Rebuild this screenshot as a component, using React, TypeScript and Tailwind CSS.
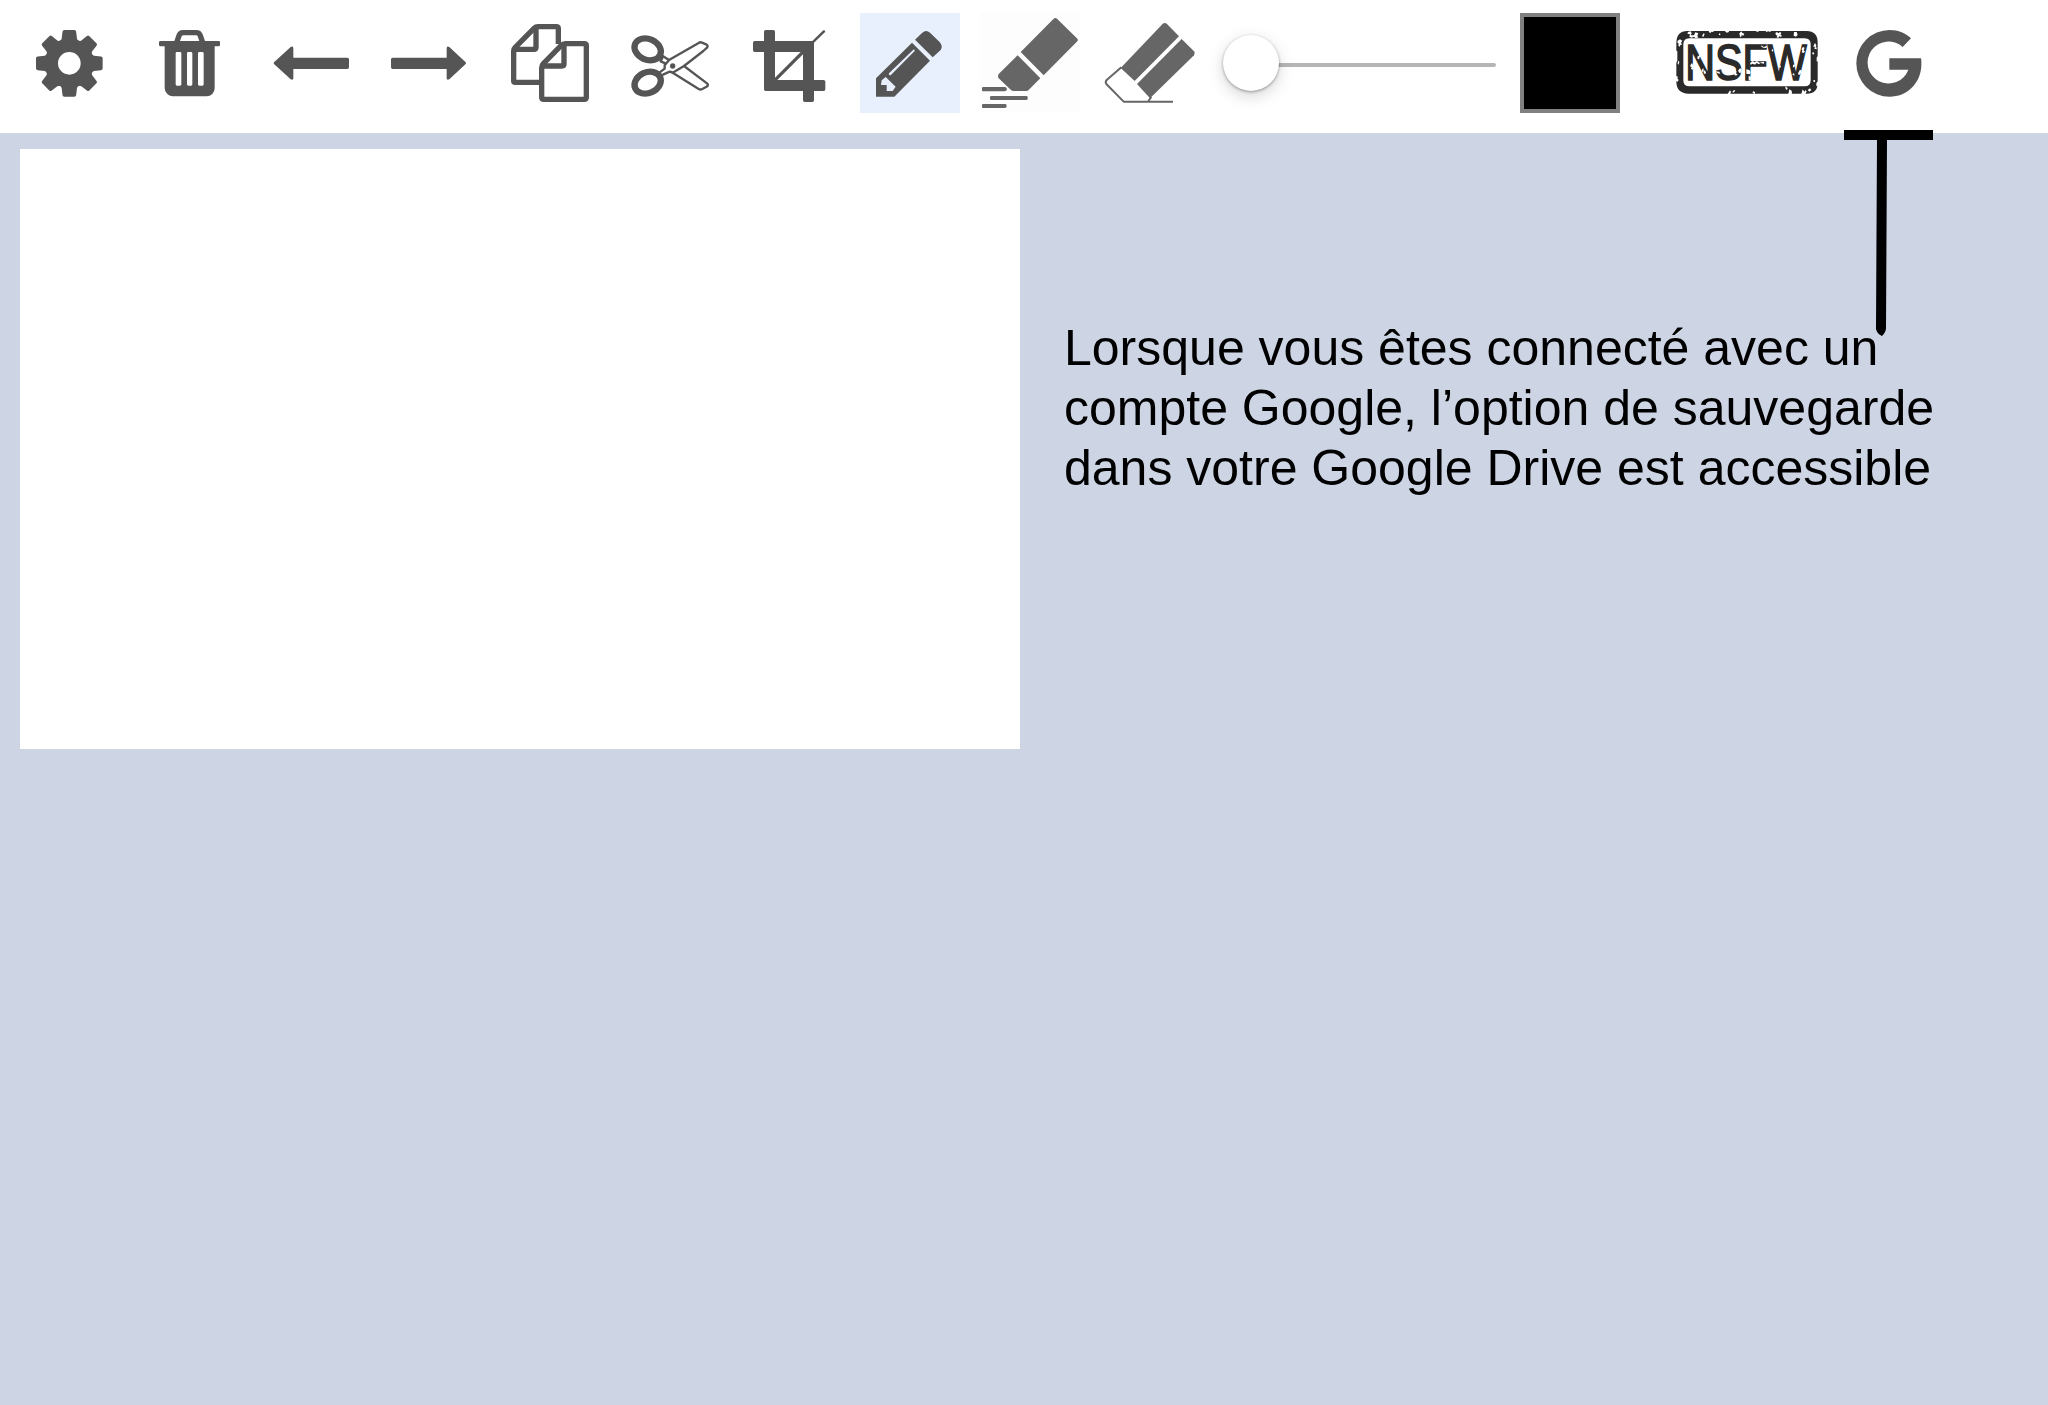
import type { ReactNode } from "react";

type ToolProps = {
  label: string;
  viewBox: string;
  className?: string;
  children: ReactNode;
};

function Tool({ label, viewBox, className = "text-[#555555]", children }: ToolProps) {
  return (
    <button type="button" aria-label={label} className={`h-[100px] w-[100px] shrink-0 ${className}`}>
      <svg viewBox={viewBox} className="block h-full w-full" fill="currentColor">
        {children}
      </svg>
    </button>
  );
}

const TEETH = [0, 45, 90, 135, 180, 225, 270, 315];

function GearIcon() {
  return (
    <>
      <path
        fillRule="evenodd"
        d="M208 116a74 74 0 1 0 0 148a74 74 0 1 0 0-148zM208 156a34 34 0 1 1 0 68a34 34 0 1 1 0-68z"
      />
      {TEETH.map((angle) => (
        <path
          key={angle}
          transform={`rotate(${angle} 208 190)`}
          d="M193 90H223Q228 90 228.500 95L231 116Q233 122 238 124L232 136H184L178 124Q183 122 185 116L187.500 95Q188 90 193 90Z"
        />
      ))}
    </>
  );
}

function TrashIcon() {
  return (
    <path
      fillRule="evenodd"
      d="M523 123L530 103Q535 90 549 90H589Q603 90 608 103L615 123H656Q660 123 660 127V135Q660 139 656 139H644V265Q644 275 637 282Q630 289 620 289H519Q509 289 502 282Q494 275 494 265V139H482Q477 139 477 135V127Q477 123 482 123ZM540 123H598L593 109Q592 106 588 106H550Q547 106 545 109ZM531 156Q527 156 527 160V253Q527 257 531 257H540Q544 257 544 253V160Q544 156 540 156ZM565 156Q561 156 561 160V253Q561 257 565 257H573Q577 257 577 253V160Q577 156 573 156ZM598 156Q594 156 594 160V253Q594 257 598 257H607Q611 257 611 253V160Q611 156 607 156Z"
    />
  );
}

function CopyIcon() {
  return (
    <g fill="none" stroke="currentColor" strokeWidth="16" strokeLinejoin="round">
      <path d="M148 247H76Q71 247 71 242V152Q71 147 75 143L132 85Q137 80 144 80H199Q205 80 205 86V132" />
      <path d="M138 84V142Q138 148 132 148H74" />
      <path d="M155 292V203Q155 196 160 191L213 137Q219 131 226 131H283Q289 131 289 137V292Q289 298 283 298H161Q155 298 155 292Z" />
      <path d="M222 135V192Q222 198 216 198H158" />
    </g>
  );
}

function ScissorsIcon() {
  return (
    <>
      <g fill="none" stroke="currentColor">
        <ellipse cx="473" cy="148" rx="41" ry="31" strokeWidth="19" transform="rotate(24 473 148)" />
        <ellipse cx="473" cy="248" rx="41" ry="31" strokeWidth="19" transform="rotate(-24 473 248)" />
        <g strokeWidth="7" strokeLinejoin="round" strokeLinecap="round">
          <path d="M537 180L626 129Q631 125 636 128L650 134Q655 138 651 143L640 153L582 198L548 218Q540 213 534 217L519 224" />
          <path d="M582 198L651 250Q656 254 652 259L637 267Q631 270 626 267L548 218" />
          <path d="M517 167L537 180L524 196V206L509 217" />
          <path d="M518 172L512 184L526 190" />
        </g>
      </g>
      <circle cx="548" cy="198" r="8" />
    </>
  );
}

function CropIcon() {
  return (
    <path
      fillRule="evenodd"
      d="M107 90H130Q135 90 135 95V123H247L280 91Q285 89 286 95L252 128V240H281Q286 240 286 245V268Q286 273 281 273H252V301Q252 306 247 306H224Q219 306 219 301V273H107Q102 273 102 268V156H74Q69 156 69 151V128Q69 123 74 123H102V95Q102 90 107 90ZM135 156V233L212 156ZM219 163L142 240H219Z"
    />
  );
}

function PencilIcon() {
  return (
    <path
      fillRule="evenodd"
      d="M555 119L576 99Q588 88 600 98L628 125Q640 138 632 150L608 172ZM546 128L600 182L493 290H438V235ZM550 149L477 220Q475 226 482 226L554 153Q555 148 550 149ZM467 231L455 241L453 255H470V273H488L497 260Z"
    />
  );
}

function HighlighterIcon() {
  return (
    <>
      <path d="M152 156L251 56Q256 52 261 56L323 117Q325 121 322 124L221 226Z" />
      <path d="M143 166L211 235L175 271Q173 273 169 273H130Q126 273 123 270L86 235Q82 229 86 222Z" />
      <path d="M39 261H106Q110 263 111 268Q110 273 105 274H39Q36 274 36 271V264Q36 261 39 261Z" />
      <rect x="60" y="288" width="113" height="12" rx="4" />
      <path d="M39 312H107Q111 314 110 319Q109 324 105 324H39Q36 324 36 321V315Q36 312 39 312Z" />
    </>
  );
}

function EraserIcon() {
  return (
    <>
      <path d="M452 204L577 73Q584 66 591 72L627 109L494 243Z" />
      <path d="M635 117L672 154Q677 160 672 166L540 295L501 252Z" />
      <path
        d="M454 202L410 240Q405 246 409 252L461 305H609M535 303L544 291"
        fill="none"
        stroke="currentColor"
        strokeWidth="6"
        strokeLinejoin="round"
      />
    </>
  );
}

function NsfwStamp() {
  return (
    <button type="button" aria-label="NSFW" className="h-[100px] w-[200px] shrink-0 text-[#2a2a2a]">
      <svg viewBox="-60 9 600 300" className="block h-full w-full" fill="currentColor">
        <path
          fillRule="evenodd"
          d="M82 63H440Q473 63 473 98V218Q473 251 440 251H86Q49 251 49 214V100Q49 63 82 63ZM88 85Q70 85 70 103V211Q70 229 88 229H434Q452 229 452 211V103Q452 85 434 85Z"
        />
        <text
          transform="translate(76 209) scale(0.83 1)"
          fontFamily="'Liberation Sans', Arial, sans-serif"
          fontSize="149"
          stroke="currentColor"
          strokeWidth="5"
        >
          NSFW
        </text>
        <g fill="#ffffff">
          <path d="M84 66l8-2 3 6-3 6 10 0 4-9 9 3-3 7 3 6-9 1-4-4-7 3-7-3 2-7-8-2z" />
          <path d="M53 92l7-4 7 4-4 6 3 6-5 1-2 5-4-3 1-6-4-4z" />
          <path d="M46 120l6 4 0 28-4 6zM54 152l4 3-2 9-3-3zM46 197l8 3-2 5 4 5-3 5-7-3z" />
          <path d="M126 78l5-8 3 2-4 9zM146 61l16 0-2 5-6-1-2 4-5-2zM178 70l4 2-3 4-3-2zM192 61l14 0 1 5-7 2zM240 68l4-4 3 5 6 2-3 6-5-2-2 7-4-3 1-5-3-2z" />
          <path d="M285 61l13 0-4 5-6-2zM317 61l17 0-3 5-6-2-7 2zM346 69l5-3 4 4 5-4 4 3-3 6 4 1-1 5-7-2-2 5-5-2 2-6-4 0zM402 66l8 0 3 8-5 6-7-3z" />
          <path d="M462 104l3-5 4 7-2 6 4 1-2 5-6-2 2-6-5 1zM456 128l5-1 2 4-4 3zM470 142l4-3v14l-4 2zM459 212l5-3 2 5-4 3zM469 219l5-5v13l-5 1z" />
          <path d="M203 252l7-11 3 4-2 7zM218 243l8-4-3 7-5 2zM277 248l4-5 4 4 0 5zM376 229l7 5-2 6-4-3zM385 252l3-14 7 4 1 10zM424 252l4-14 5 7 4-5 3 5-4 7zM443 240l7-5 4 5-6 5z" />
          <path d="M110 110l7-5 2 10-6-2zM112 140l7-5 3 4-5 5 2 4-6-1zM92 164l4-5 3 6 6-2-3 6 5 3-7 2-3 6-4-4 2-5-5-2zM125 180l5-6 1 9-4 4zM131 183l4-2 3 7-3 5-4-4z" />
          <path d="M166 184l12 1 3 6-8-1zM220 191l5-11 5 5-2 5 5 4-6 3zM234 182l6-7 5 2 0 11-7 0zM234 152l5-2 4 6 0 6-6-4z" />
          <path d="M270 160l7-7 7 4 7-4 7 5 14-3 0 6-11-2-4 4-7-4-5 5-7-3-6 3zM259 178l9 2 4 7-3 6-10-2zM266 198l8 2-2 12-6-1zM304 106l7 5 11-4-3 7-9-1-6-3z" />
          <path d="M336 117l4 3-1 5-4-3zM357 168l4-2 2 5-4 2zM398 169l4-7 3 4-3 7zM424 118l5-7 5 2-3 8 4 4-5 4-5-2 2-6zM397 192l5-2 2 7-5-2zM414 190l6-11 5 3-4 11-5 2z" />
        </g>
      </svg>
    </button>
  );
}

function GoogleIcon() {
  return (
    <path d="M243 115L218 141A63 63 0 1 0 235 209H178V175H273Q275 182 274 198C271 252 230 290 179 290A100 100 0 1 1 179 90C205 90 228 100 243 115Z" />
  );
}

function SizeSlider() {
  return (
    <div className="relative h-[100px] w-[280px] shrink-0">
      <div className="absolute top-[50px] left-1 h-1 w-[272px] rounded-full bg-[#b5b5b5]" />
      <div className="absolute top-[22px] left-[3px] h-14 w-14 rounded-full bg-white shadow-[0_1px_3px_rgba(0,0,0,0.35),0_5px_16px_rgba(0,0,0,0.17)]" />
    </div>
  );
}

function Toolbar() {
  return (
    <header className="flex h-[133px] items-start gap-5 bg-white pt-[13px] pl-5">
      <Tool label="Paramètres" viewBox="60 39 300 300"><GearIcon /></Tool>
      <Tool label="Supprimer" viewBox="420 39 300 300"><TrashIcon /></Tool>
      <Tool label="Annuler" viewBox="30 39 300 300">
        <path d="M72 187L122 141Q130 137 130 145V173H292Q297 173 297 178V202Q297 207 292 207H130V235Q130 242 122 238L72 192Q70 189 72 187Z" />
      </Tool>
      <Tool label="Rétablir" viewBox="390 39 300 300">
        <path d="M647 187L598 141Q590 137 590 145V173H428Q423 173 423 178V202Q423 207 428 207H590V235Q590 242 598 238L647 192Q649 189 647 187Z" />
      </Tool>
      <Tool label="Copier" viewBox="30 39 300 300"><CopyIcon /></Tool>
      <Tool label="Couper" viewBox="390 39 300 300"><ScissorsIcon /></Tool>
      <Tool label="Rogner" viewBox="30 39 300 300"><CropIcon /></Tool>
      <Tool label="Crayon" viewBox="390 39 300 300" className="bg-[#e8f0fe] text-[#555555]"><PencilIcon /></Tool>
      <Tool label="Surligneur" viewBox="30 39 300 300" className="bg-[#fdfdfd] text-[#666666]"><HighlighterIcon /></Tool>
      <Tool label="Gomme" viewBox="390 39 300 300" className="text-[#666666]"><EraserIcon /></Tool>
      <SizeSlider />
      <button type="button" aria-label="Couleur" className="h-[100px] w-[100px] shrink-0 border-4 border-[#808080] bg-black" />
      <div className="flex">
        <NsfwStamp />
        <Tool label="Google" viewBox="30 39 300 300"><GoogleIcon /></Tool>
      </div>
    </header>
  );
}

export default function App() {
  return (
    <div className="relative h-[1405px] w-[2048px] overflow-hidden bg-[#cdd4e4] font-['Liberation_Sans',Arial,sans-serif]">
      <Toolbar />
      <main className="flex items-start pt-4 pl-5">
        <div className="h-[600px] w-[1000px] shrink-0 bg-white" />
        <p className="mt-[169px] ml-[44px] text-[50px] leading-[60px] whitespace-nowrap text-black">
          Lorsque vous êtes connecté avec un
          <br />
          compte Google, l’option de sauvegarde
          <br />
          dans votre Google Drive est accessible
        </p>
      </main>
      <svg viewBox="0 0 90 207" className="absolute top-[130px] left-[1844px] h-[207px] w-[90px]">
        <path d="M0 0H89V10H43L42 198Q42 202 38 206Q33 204 32 199L33 10H0Z" fill="#000000" />
      </svg>
    </div>
  );
}
